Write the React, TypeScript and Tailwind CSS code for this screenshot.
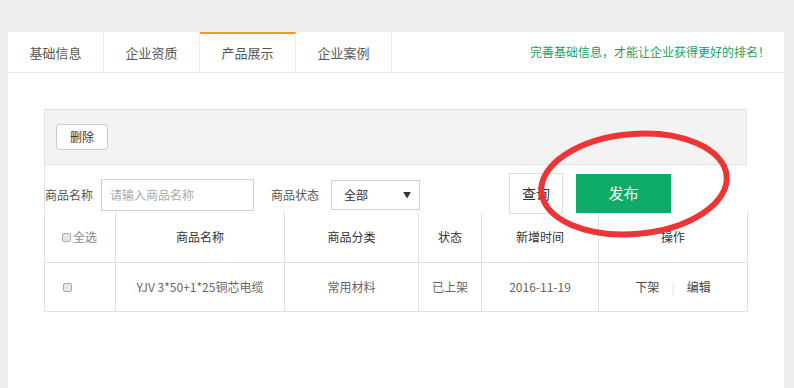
import React from 'react';

const tabs = ['基础信息', '企业资质', '产品展示', '企业案例'];

const font = { fontFamily: '"Noto Sans CJK SC", "Noto Sans", sans-serif' };

export default function App() {
  const active = 2;

  return (
    <div className="h-[388px] w-[794px] overflow-hidden bg-[#efefef] pt-[32px] pl-[8px]" style={font}>
      <div className="relative h-[356px] w-[776px] bg-white">
        {/* tabs */}
        <div className="flex h-[41px] items-stretch border-b border-[#e8e8e8]">
          {tabs.map((t, i) => (
            <div
              key={t}
              className={
                i === active
                  ? 'flex w-[96px] items-center justify-center border-t-[2px] border-r border-t-[#f39a1e] border-r-[#ececec] text-[13px] text-[#555]'
                  : 'flex w-[96px] items-center justify-center border-t-[2px] border-r border-t-transparent border-r-[#ececec] text-[13px] text-[#555]'
              }
            >
              {t}
            </div>
          ))}
          <div className="flex flex-1 items-center justify-end pr-[14px] text-[12px] text-[#1a9f5e]">
            完善基础信息，才能让企业获得更好的排名！
          </div>
        </div>

        <div className="pl-[36px] pt-[36px]">
          <div className="w-[703px]">
            {/* toolbar */}
            <div className="flex h-[56px] items-center border border-[#e2e2e2] bg-[#f3f3f3] pl-[11px]">
              <button className="h-[26px] w-[52px] rounded-[3px] border border-[#ccc] bg-white text-[12px] text-[#333]">
                删除
              </button>
            </div>

            {/* search row */}
            <div className="relative z-10 flex h-[48px] items-start border-l border-[#e2e2e2] text-[12px] text-[#555]">
              <span className="mt-[20px] w-[56px] leading-[20px]">商品名称</span>
              <div className="mt-[14px] flex h-[32px] w-[153px] items-center border border-[#cfcfcf] pl-[8px] text-[#aaa]">
                请输入商品名称
              </div>
              <span className="mt-[20px] ml-[17px] w-[60px] leading-[20px]">商品状态</span>
              <div className="mt-[15px] flex h-[30px] w-[89px] items-center justify-between border border-[#cfcfcf] pl-[12px] pr-[8px] text-[#333]">
                <span>全部</span>
                <span className="text-[8px]">▼</span>
              </div>
              <button className="mt-[8px] ml-[89px] h-[41px] w-[54px] border border-[#ddd] bg-white text-[14px] text-[#333]">
                查询
              </button>
              <button className="mt-[9px] ml-[13px] h-[39px] w-[95px] bg-[#0fac67] text-[15px] text-white">
                发布
              </button>
            </div>

            {/* table */}
            <table className="w-[703px] table-fixed border-collapse text-[12px]">
              <colgroup>
                <col className="w-[71px]" />
                <col className="w-[169px]" />
                <col className="w-[134px]" />
                <col className="w-[63px]" />
                <col className="w-[117px]" />
                <col className="w-[149px]" />
              </colgroup>
              <thead>
                <tr className="h-[49px] text-[#333]">
                  <th className="border border-t-0 border-[#e0e0e0] pl-[17px] text-left font-normal text-[#888]">
                    <span className="flex items-center gap-[2px]">
                      <span className="inline-block h-[9px] w-[9px] rounded-[2px] border border-[#aaa] bg-[#e6e6e6]" />
                      全选
                    </span>
                  </th>
                  <th className="border border-t-0 border-[#e0e0e0] font-normal">商品名称</th>
                  <th className="border border-t-0 border-[#e0e0e0] font-normal">商品分类</th>
                  <th className="border border-t-0 border-[#e0e0e0] font-normal">状态</th>
                  <th className="border border-t-0 border-[#e0e0e0] font-normal">新增时间</th>
                  <th className="border border-t-0 border-[#e0e0e0] font-normal">操作</th>
                </tr>
              </thead>
              <tbody>
                <tr className="h-[49px] text-center text-[#666]">
                  <td className="border border-[#e0e0e0] pl-[18px] text-left">
                    <span className="inline-block h-[9px] w-[9px] rounded-[2px] border border-[#aaa] bg-[#e6e6e6]" />
                  </td>
                  <td className="border border-[#e0e0e0]">YJV 3*50+1*25铜芯电缆</td>
                  <td className="border border-[#e0e0e0]">常用材料</td>
                  <td className="border border-[#e0e0e0]">已上架</td>
                  <td className="border border-[#e0e0e0]">2016-11-19</td>
                  <td className="border border-[#e0e0e0] text-[#444]">
                    <span>下架</span>
                    <span className="mx-[12px] text-[#ddd]">|</span>
                    <span>编辑</span>
                  </td>
                </tr>
              </tbody>
            </table>
          </div>
        </div>

        {/* hand-drawn highlight */}
        <svg className="pointer-events-none absolute left-[526px] top-[92px] z-20" width="216" height="124" viewBox="0 0 216 124">
          <ellipse cx="100" cy="60" rx="93" ry="50" fill="none" stroke="#ee3535" strokeWidth="6" transform="rotate(-5 100 60)" />
        </svg>
      </div>
    </div>
  );
}
